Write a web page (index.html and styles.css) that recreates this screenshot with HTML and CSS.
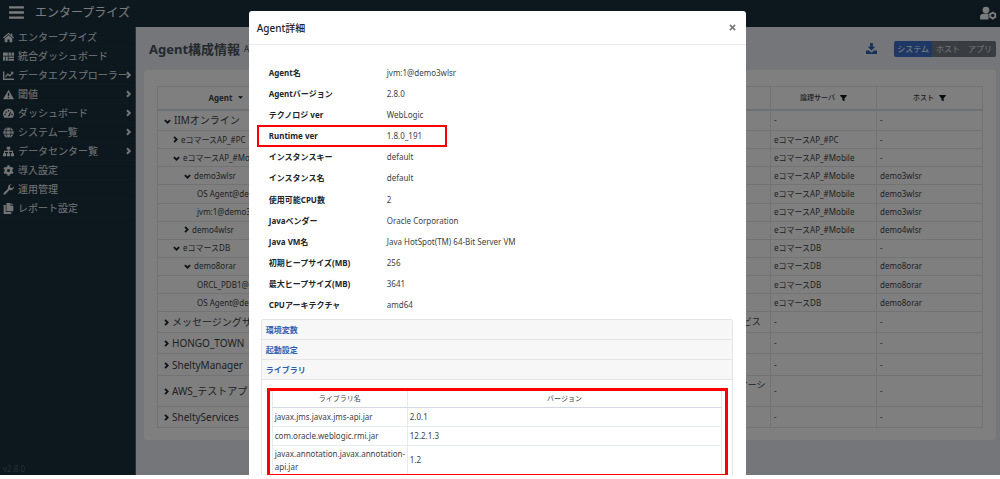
FILE: index.html
```html
<!DOCTYPE html>
<html lang="ja">
<head>
<meta charset="utf-8">
<title>エンタープライズ - Agent構成情報</title>
<link rel="stylesheet" href="styles.css">
</head>
<body>
<svg class="defs" aria-hidden="true">
  <symbol id="right" viewBox="0 0 8 12"><path d="M1.500 1.500 6 6l-4.500 4.500" fill="none" stroke="currentColor" stroke-width="3.200"/></symbol>
  <symbol id="down" viewBox="0 0 12 8"><path d="M1.500 1.500 6 6l4.500-4.500" fill="none" stroke="currentColor" stroke-width="3.200"/></symbol>
  <symbol id="filter" viewBox="0 0 16 16"><path d="M.5 1h15v2L10.500 8.500V15.500l-5-2.500V8.500L.5 3z" fill="currentColor"/></symbol>
</svg>
<div class="app">
  <header class="topbar">
    <button class="plain menu" aria-label="メニュー"><svg viewBox="0 0 16 14"><path d="M0 1.500h16M0 7h16M0 12.500h16" stroke="currentColor" stroke-width="2.600"/></svg></button>
    <span class="brand">エンタープライズ</span>
    <button class="plain user" aria-label="ユーザー設定"><svg viewBox="0 0 20 16"><g fill="currentColor"><circle cx="7" cy="4.500" r="4"/><path d="M0 15v-2.500C0 10 2 9 4 9h6v6.500H.5z"/></g><circle cx="15" cy="11" r="3" fill="none" stroke="currentColor" stroke-width="2"/><path d="M15 6.500v2M15 13.500v2M11.100 8.700l1.700 1M17.200 12.300l1.700 1M11.100 13.300l1.700-1M17.200 9.700l1.700-1" stroke="currentColor" stroke-width="2"/></svg></button>
  </header>
  <div class="body">
    <nav class="side">
      <a href="#"><svg viewBox="0 0 16 16"><path d="M8 1 0 8l1 1.300L8 3.300l7 6L16 8l-2.500-2.200V2h-2v2zM2.500 9.200V15h4v-4h3v4h4V9.200L8 4.600z" fill="currentColor"/></svg><span>エンタープライズ</span></a>
      <a href="#"><svg viewBox="0 0 16 16"><path d="M0 2h7v5H0zM8 2h3.500v5H8zM12.500 2H16v5h-3.500zM0 8h3v6H0zM4 8h3v6H4zM8 8h8v2.500H8zM8 11.500h8V14H8z" fill="currentColor"/></svg><span>統合ダッシュボード</span></a>
      <a href="#"><svg viewBox="0 0 16 16"><path d="M1 2v11.500h15M3.500 10l3.500-4 3 2.500L14 4" fill="none" stroke="currentColor" stroke-width="2"/><path d="M10.500 2.500H15V7z" fill="currentColor"/></svg><span>データエクスプローラー</span><svg class="go"><use href="#right"/></svg></a>
      <a href="#"><svg viewBox="0 0 16 16"><path fill-rule="evenodd" d="M8 1 0 15h16zM7 5.500h2V10H7zM7 11.300h2v2H7z" fill="currentColor"/></svg><span>閾値</span><svg class="go"><use href="#right"/></svg></a>
      <a href="#"><svg viewBox="0 0 16 16"><path fill-rule="evenodd" d="M2 14a8 8 0 1 1 12 0zM7 3h2v2H7zM3.500 5h2v2h-2zM2 8.500h2v2H2zM12 8.500h2v2h-2zM7 12l4-7 1 .5L9.500 12z" fill="currentColor"/></svg><span>ダッシュボード</span><svg class="go"><use href="#right"/></svg></a>
      <a href="#"><svg viewBox="0 0 16 16"><circle cx="8" cy="8" r="7.500" fill="currentColor"/><g fill="none" stroke="#18303c" stroke-width="1"><ellipse cx="8" cy="8" rx="3.500" ry="7.500"/><path d="M0 5.500h16M0 10.500h16"/></g></svg><span>システム一覧</span><svg class="go"><use href="#right"/></svg></a>
      <a href="#"><svg viewBox="0 0 16 16"><path d="M5.500 1h5v4h-5zM0 10.500h4.500V15H0zM5.700 10.500h4.600V15H5.700zM11.500 10.500H16V15h-4.500z" fill="currentColor"/><path d="M8 5v6M2.200 11V7.800h11.600V11" fill="none" stroke="currentColor" stroke-width="1.500"/></svg><span>データセンター覧</span><svg class="go"><use href="#right"/></svg></a>
      <a href="#"><svg viewBox="0 0 16 16"><circle cx="8" cy="8" r="4" fill="none" stroke="currentColor" stroke-width="3.500"/><path d="M8 .5v3M8 12.500v3M1.500 4.200l2.600 1.500M11.900 10.300l2.600 1.500M1.500 11.800l2.600-1.500M11.900 5.700l2.600-1.500" stroke="currentColor" stroke-width="3.200"/></svg><span>導入設定</span></a>
      <a href="#"><svg viewBox="0 0 16 16"><path d="M15.600 3.500 13 6l-2.500-.5L10 3 12.500.5C9 0 6.500 3 7.500 6.500L1 13a1.500 1.500 0 0 0 2 2.200l6.500-6.500c3.500 1 7-1.700 6.100-5.200z" fill="currentColor"/></svg><span>運用管理</span></a>
      <a href="#"><svg viewBox="0 0 16 16"><path d="M5 0h6v4h4v8H5zM12 0l3 3h-3zM1 3h3v10h8v3H1z" fill="currentColor"/></svg><span>レポート設定</span></a>
      <span class="version">v2.8.0</span>
    </nav>
    <main class="main">
      <div class="heading">
        <h1>Agent構成情報</h1><span class="sub">Agent一覧</span>
        <button class="plain download" aria-label="ダウンロード"><svg viewBox="0 0 16 16"><path d="M6 0h4v5.500h3.500L8 11 2.500 5.500H6zM0 11h4.500L8 14l3.500-3H16v5H0z" fill="currentColor"/></svg></button>
        <div class="switch"><button class="on">システム</button><button>ホスト</button><button>アプリ</button></div>
      </div>
      <section class="card">
        <table class="agents">
          <colgroup><col class="c-agent"><col><col class="c-system"><col class="c-std"><col class="c-std"></colgroup>
          <thead><tr><th><span class="label bold">Agent <svg class="caret" viewBox="0 0 8 4"><path d="M0 0h8L4 4z" fill="currentColor"/></svg></span></th><th></th><th>システム</th><th><span class="label">論理サーバ <svg><use href="#filter"/></svg></span></th><th><span class="label">ホスト <svg><use href="#filter"/></svg></span></th></tr></thead>
          <tbody>
            <tr class="top"><td><svg class="dn"><use href="#down"/></svg>IIMオンライン</td><td></td><td></td><td>-</td><td>-</td></tr>
            <tr><td class="l1"><svg class="rt"><use href="#right"/></svg>eコマースAP_#PC</td><td></td><td></td><td>eコマースAP_#PC</td><td>-</td></tr>
            <tr><td class="l1"><svg class="dn"><use href="#down"/></svg>eコマースAP_#Mobile</td><td></td><td></td><td>eコマースAP_#Mobile</td><td>-</td></tr>
            <tr><td class="l2"><svg class="dn"><use href="#down"/></svg>demo3wlsr</td><td></td><td></td><td>eコマースAP_#Mobile</td><td>demo3wlsr</td></tr>
            <tr><td class="l3">OS Agent@demo3wlsr</td><td></td><td></td><td>eコマースAP_#Mobile</td><td>demo3wlsr</td></tr>
            <tr><td class="l3">jvm:1@demo3wlsr</td><td></td><td></td><td>eコマースAP_#Mobile</td><td>demo3wlsr</td></tr>
            <tr><td class="l2"><svg class="rt"><use href="#right"/></svg>demo4wlsr</td><td></td><td></td><td>eコマースAP_#Mobile</td><td>demo4wlsr</td></tr>
            <tr><td class="l1"><svg class="dn"><use href="#down"/></svg>eコマースDB</td><td></td><td></td><td>eコマースDB</td><td>-</td></tr>
            <tr><td class="l2"><svg class="dn"><use href="#down"/></svg>demo8orar</td><td></td><td></td><td>eコマースDB</td><td>demo8orar</td></tr>
            <tr><td class="l3">ORCL_PDB1@demo8orar</td><td></td><td></td><td>eコマースDB</td><td>demo8orar</td></tr>
            <tr><td class="l3">OS Agent@demo8orar</td><td></td><td></td><td>eコマースDB</td><td>demo8orar</td></tr>
            <tr class="top"><td><svg class="rt"><use href="#right"/></svg>メッセージングサービス</td><td></td><td class="wrap">メッセージングサービス</td><td>-</td><td>-</td></tr>
            <tr class="top"><td><svg class="rt"><use href="#right"/></svg>HONGO_TOWN</td><td></td><td></td><td>-</td><td>-</td></tr>
            <tr class="top"><td><svg class="rt"><use href="#right"/></svg>SheltyManager</td><td></td><td></td><td>-</td><td>-</td></tr>
            <tr class="top tall"><td><svg class="rt"><use href="#right"/></svg>AWS_テストアプリケーション</td><td></td><td class="wrap">AWS_テストアプリケーション</td><td>-</td><td>-</td></tr>
            <tr class="top"><td><svg class="rt"><use href="#right"/></svg>SheltyServices</td><td></td><td></td><td>-</td><td>-</td></tr>
          </tbody>
        </table>
      </section>
    </main>
  </div>
  <div class="backdrop">
    <div class="modal" role="dialog" aria-labelledby="dialog-title">
      <div class="modal-head"><h2 id="dialog-title">Agent詳細</h2><button class="plain close" aria-label="閉じる"><svg viewBox="0 0 8 8"><path d="m1 1 6 6M7 1 1 7" stroke="currentColor" stroke-width="1.800"/></svg></button></div>
      <div class="modal-body">
        <dl class="details">
          <div><dt>Agent名</dt><dd>jvm:1@demo3wlsr</dd></div>
          <div><dt>Agentバージョン</dt><dd>2.8.0</dd></div>
          <div><dt>テクノロジ ver</dt><dd>WebLogic</dd></div>
          <div class="marked"><dt>Runtime ver</dt><dd>1.8.0_191</dd></div>
          <div><dt>インスタンスキー</dt><dd>default</dd></div>
          <div><dt>インスタンス名</dt><dd>default</dd></div>
          <div><dt>使用可能CPU数</dt><dd>2</dd></div>
          <div><dt>Javaベンダー</dt><dd>Oracle Corporation</dd></div>
          <div><dt>Java VM名</dt><dd>Java HotSpot(TM) 64-Bit Server VM</dd></div>
          <div><dt>初期ヒープサイズ(MB)</dt><dd>256</dd></div>
          <div><dt>最大ヒープサイズ(MB)</dt><dd>3641</dd></div>
          <div><dt>CPUアーキテクチャ</dt><dd>amd64</dd></div>
        </dl>
        <div class="accordion">
          <button>環境変数</button>
          <button>起動設定</button>
          <button aria-expanded="true">ライブラリ</button>
          <div class="panel">
            <div class="frame">
              <table class="libs">
                <colgroup><col class="c-lib"><col></colgroup>
                <thead><tr><th>ライブラリ名</th><th>バージョン</th></tr></thead>
                <tbody>
                  <tr><td>javax.jms.javax.jms-api.jar</td><td>2.0.1</td></tr>
                  <tr><td>com.oracle.weblogic.rmi.jar</td><td>12.2.1.3</td></tr>
                  <tr><td>javax.annotation.javax.annotation-api.jar</td><td>1.2</td></tr>
                </tbody>
              </table>
            </div>
          </div>
        </div>
      </div>
    </div>
  </div>
</div>
</body>
</html>
```
FILE: styles.css
```css
*, *::after { box-sizing: border-box; }
body {
  margin: 0;
  background: #fff;
  color: #3c4248;
  font: 8px/12px "Noto Sans", "Noto Sans CJK JP", sans-serif;
}
button { font: inherit; cursor: pointer; }
svg { display: block; flex: none; }
.defs { display: none; }
.plain { border: 0; padding: 0; background: none; color: inherit; }

.app { position: relative; display: flex; flex-direction: column; height: calc(100vh - 4px); }
.topbar { display: flex; align-items: center; height: 27px; padding: 0 3px 2px 9px; background: #18303c; color: #f4f6f8; }
.menu svg { width: 15px; height: 13px; }
.brand { flex: 1; margin-left: 11px; font-size: 12px; line-height: 18px; }
.user svg { width: 17px; height: 14px; }

.body { flex: 1; display: flex; min-height: 0; }
.side { display: flex; flex-direction: column; width: 136px; flex: none; padding-top: 1px; background: #18303c; border-right: 1px solid #54626c; color: #e6e9ec; }
.side a { display: flex; align-items: center; height: 19px; padding: 0 4px 0 3px; gap: 4px; color: inherit; text-decoration: none; font-size: 10px; line-height: 19px; border-bottom: 1px solid #1c3441; white-space: nowrap; }
.side a svg { width: 11px; height: 11px; }
.side a span { flex: 1; min-width: 0; }
.side a .go { width: 5px; height: 8px; }
.version { margin-top: auto; padding: 0 3px; color: #4b5f6b; }

.main { flex: 1; min-width: 0; padding: 0 4px 0 8px; background: #e9edf2; }
.heading { display: flex; align-items: center; height: 43px; padding-left: 5px; }
h1 { margin: 0; font-size: 13px; line-height: 20px; color: #4a525a; }
.sub { flex: 1; margin-left: 4px; }
.download { color: #2f62b4; margin-right: 17px; }
.download svg { width: 11px; height: 11px; }
.switch { display: flex; border-radius: 2px; overflow: hidden; }
.switch button { height: 16px; border: 0; padding: 0 4px; background: #727981; color: #e6e9ec; }
.switch .on { padding: 0 3px; background: #3f6fc8; color: #fff; }

.card { padding: 16px 13px 12px; background: #fff; border-radius: 3px; }
table { width: 100%; border-collapse: collapse; table-layout: fixed; }
.agents { height: 342px; }
.agents th, .agents td { border: 1px solid #e4e7ea; padding: 0 3px; height: 18px; text-align: left; white-space: nowrap; overflow: hidden; }
.agents th { height: 23px; border-bottom: 2px solid #dde1e5; text-align: center; font-size: 7px; font-weight: 500; }
.agents .top td { height: 21px; }
.agents .tall td { height: 31px; }
.agents .top td:first-child { font-size: 10px; padding-left: 6px; }
.agents .wrap { white-space: normal; font-size: 9px; }
.agents td svg { display: inline-block; margin-right: 3px; color: #20262c; }
.rt { width: 5px; height: 7px; }
.dn { width: 7px; height: 5px; }
.agents .l1 { padding-left: 15px; }
.agents .l2 { padding-left: 26px; }
.agents .l3 { padding-left: 39px; }
.c-agent { width: 136px; }
.c-system { width: 112px; }
.c-std { width: 106px; }
.c-lib { width: 135px; }
.label { display: flex; align-items: center; justify-content: center; gap: 5px; }
.label svg { width: 7px; height: 8px; color: #101820; }
.label .caret { width: 5px; height: 3px; }
.bold { font-size: 8px; font-weight: 700; }

.backdrop { position: absolute; inset: 0; display: flex; justify-content: center; padding: 11px 5px 0 0; background: rgba(0, 0, 0, .5); }
.modal { display: flex; flex-direction: column; width: 50%; background: #fff; border-radius: 3px 3px 0 0; }
.modal-head { display: flex; flex: none; align-items: center; justify-content: space-between; height: 34px; padding: 0 10px 0 8px; border-bottom: 1px solid #e9ecef; color: #212529; }
h2 { margin: 0; font-size: 10px; line-height: 16px; font-weight: 500; }
.close svg { width: 7px; height: 7px; color: #777; }
.modal-body { padding: 17px 13px 0 12px; }
.details { display: grid; grid-auto-rows: 1fr; min-height: 254px; margin: 0; }
.details div { display: flex; align-items: center; padding-left: 8px; }
.details dt { width: 118px; font-weight: 700; color: #212529; }
.details dd { margin: 0; }
.details .marked { position: relative; }
.marked::after { content: ""; position: absolute; left: -4px; top: 0; width: 190px; height: 22px; border: 2px solid #f00; }
.accordion { margin-top: 3px; border: 1px solid #e3e5e7; border-bottom: 0; border-radius: 2px 2px 0 0; }
.accordion button { display: block; width: 100%; height: 20px; padding: 0 4px; border: 0; border-bottom: 1px solid #e3e5e7; background: #f7f7f7; color: #2e5fb0; font-weight: 700; text-align: left; }
.panel { padding: 8px 4px 0 5px; }
.frame { border: 3px solid #f00; padding: 0 3px 0 2px; }
.libs { line-height: 13px; }
.libs th { height: 16px; padding: 0; font-size: 7px; font-weight: 400; border-bottom: 1px solid #d5dae0; }
.libs th, .libs td { border-left: 1px solid #e9ecef; border-right: 1px solid #e9ecef; }
.libs td { height: 19px; padding: 0 2px; border-bottom: 1px solid #e9ecef; }
.libs tr:last-child td { height: 29px; border-bottom: 0; }
```
